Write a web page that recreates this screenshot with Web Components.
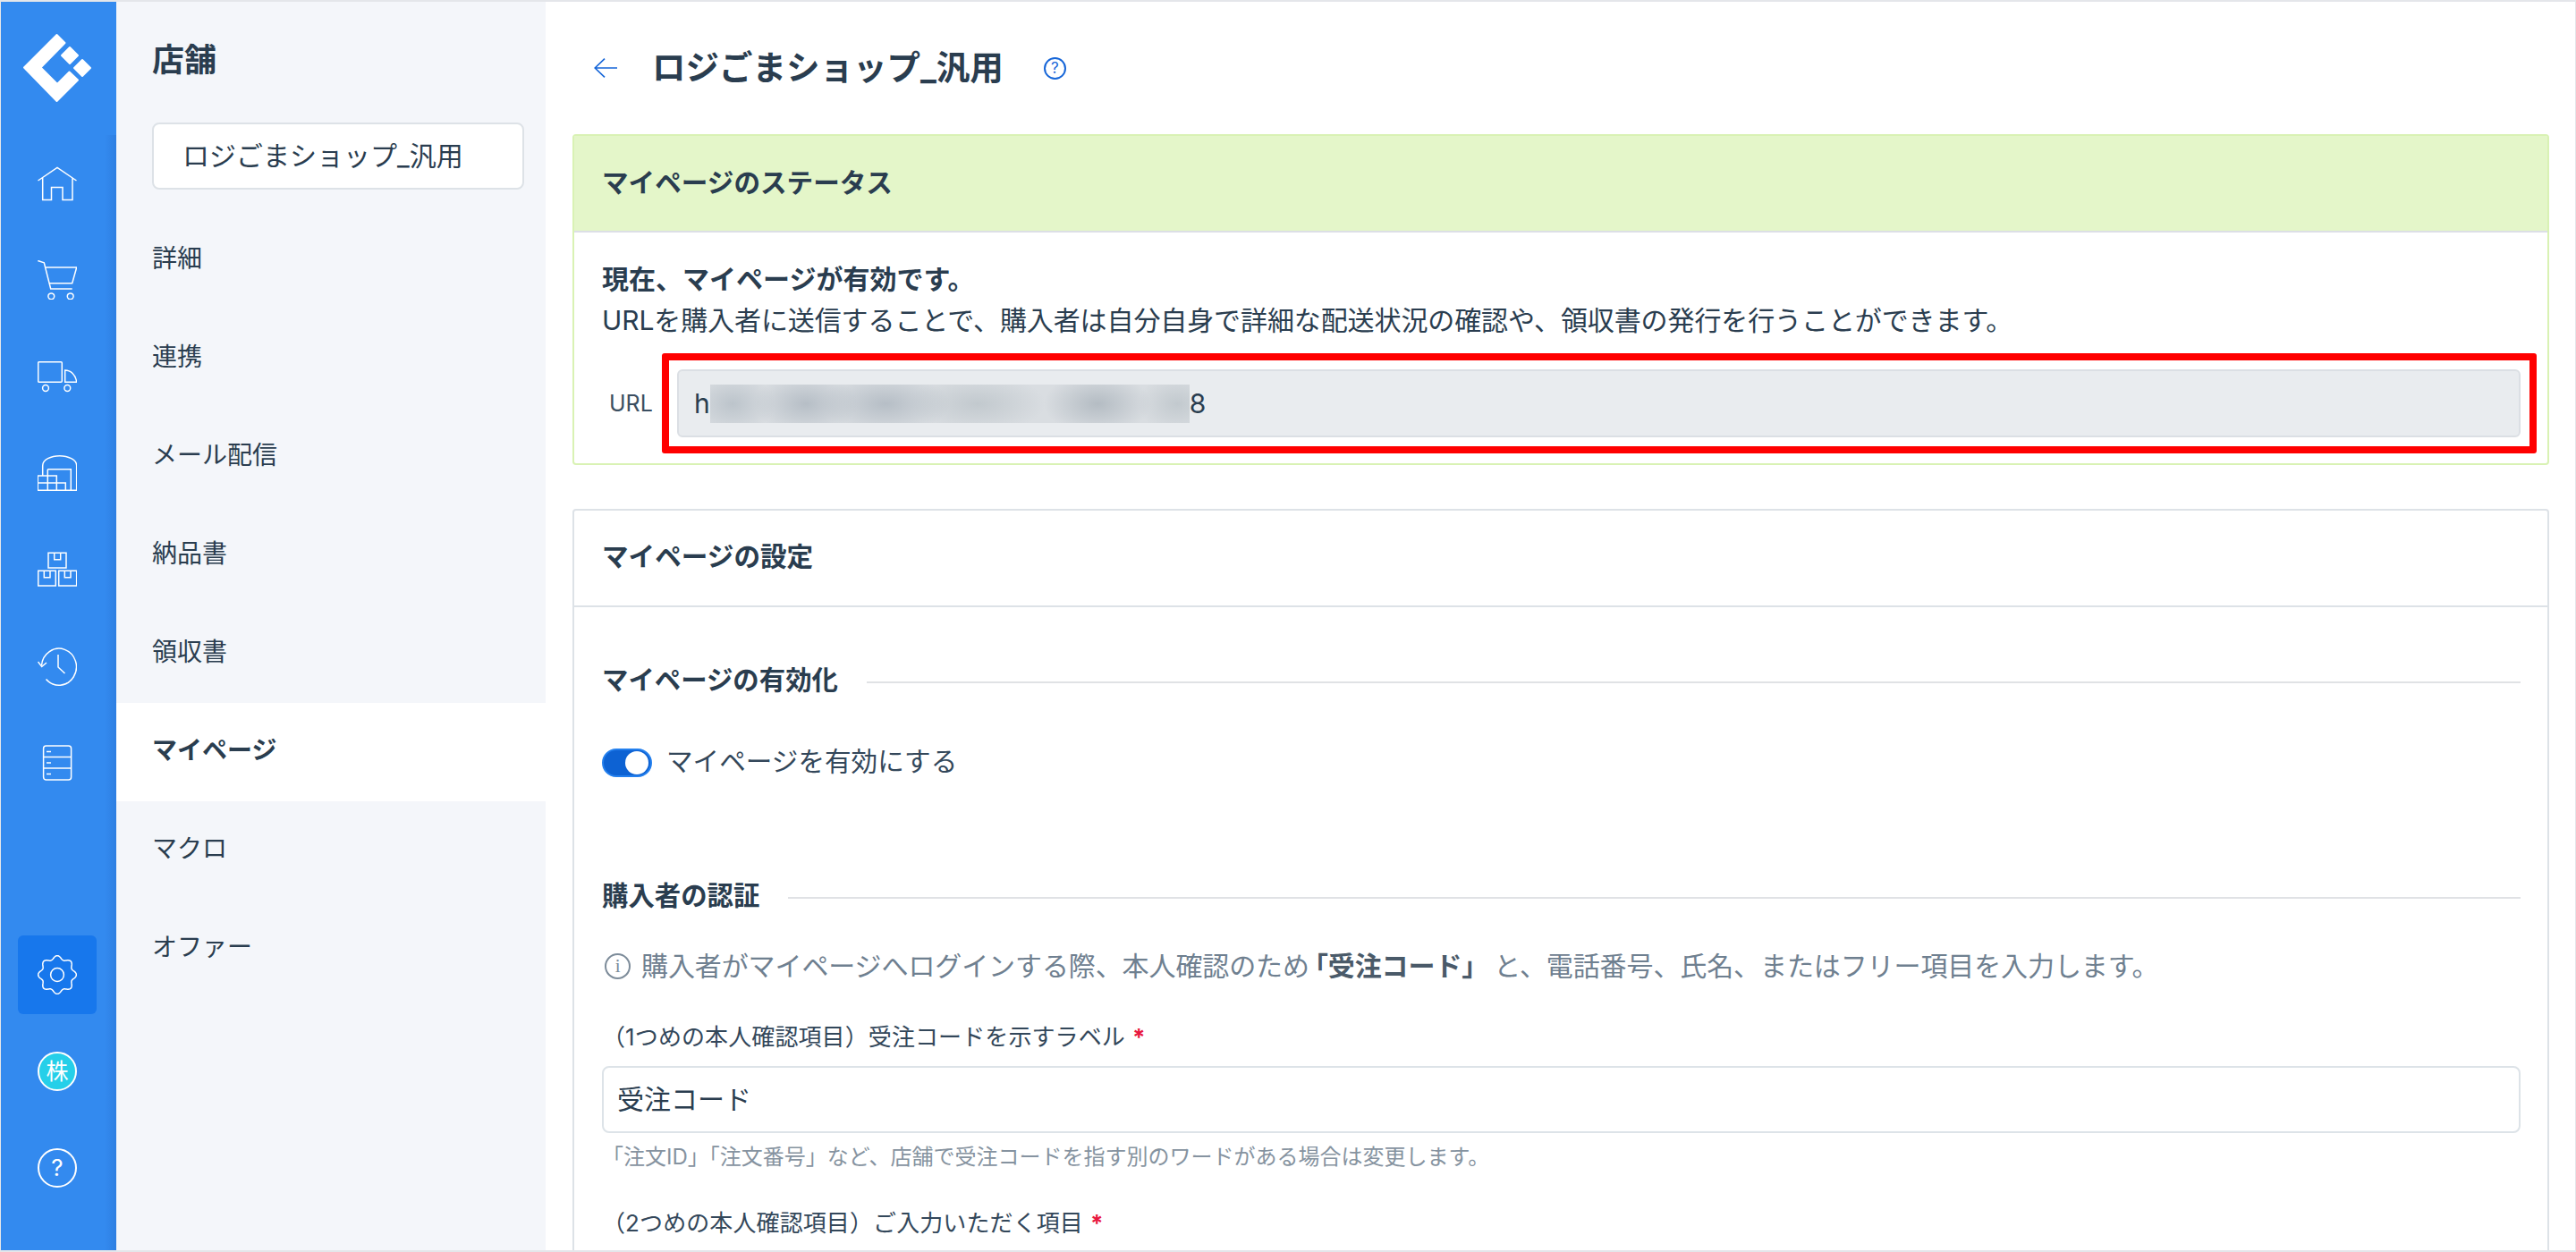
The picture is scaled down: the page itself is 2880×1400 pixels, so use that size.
<!DOCTYPE html>
<html lang="ja">
<head>
<meta charset="utf-8">
<title>マイページ</title>
<style>
    html, body { margin: 0; padding: 0; background: #fff; }
    body { font-family: Inter, "Noto Sans CJK JP", sans-serif; color: #2a3d4f; }
</style>
</head>
<body>
<app-shell>
    <rail-nav slot="rail"></rail-nav>
    <sub-nav slot="sub" heading="店舗" shop="ロジごまショップ_汎用">
        <sub-item>詳細</sub-item>
        <sub-item>連携</sub-item>
        <sub-item>メール配信</sub-item>
        <sub-item>納品書</sub-item>
        <sub-item>領収書</sub-item>
        <sub-item active>マイページ</sub-item>
        <sub-item>マクロ</sub-item>
        <sub-item>オファー</sub-item>
    </sub-nav>
    <page-head heading="ロジごまショップ_汎用"></page-head>

    <panel-card heading="マイページのステータス" tone="green">
        <status-body></status-body>
    </panel-card>

    <panel-card heading="マイページの設定" class="second">
        <section-head style="margin-top:59px">マイページの有効化</section-head>
        <toggle-row style="margin-top:53px">マイページを有効にする</toggle-row>
        <section-head style="margin-top:110px">購入者の認証</section-head>
        <info-note style="margin-top:32px">購入者がマイページへログインする際、本人確認のため<b>「受注コード」</b>と、電話番号、氏名、またはフリー項目を入力します。</info-note>
        <field-label style="margin-top:37px">（1つめの本人確認項目）受注コードを示すラベル</field-label>
        <text-box style="margin-top:12px">受注コード</text-box>
        <field-hint style="margin-top:9px">「注文ID」「注文番号」など、店舗で受注コードを指す別のワードがある場合は変更します。</field-hint>
        <field-label style="margin-top:36px;margin-bottom:80px">（2つめの本人確認項目）ご入力いただく項目</field-label>
    </panel-card>
</app-shell>

<script>
// small helper so each element only has to give its markup
function shadow(el, html) {
    el.attachShadow({ mode: 'open' }).innerHTML = html;
}

function gearPath() {
    let d = '';
    for (let i = 0; i <= 240; i++) {
        const a = i / 240 * Math.PI * 2;
        const r = 19.4 + 2 * Math.cos(8 * a);
        const x = 22 + r * Math.sin(a);
        const y = 22 - r * Math.cos(a);
        d += (i ? 'L' : 'M') + x.toFixed(2) + ' ' + y.toFixed(2);
    }
    return d + 'Z';
}

const RAIL_ICONS = {
    home: `<path d="M0.5 19 L22 4.5 L43.5 19 M5.7 15.5 V40.5 H15.5 V26.5 H28 V40.5 H39 V15.5"/>`,
    cart: `<path d="M0.3 0.5 L7.3 2.8 L14.7 32 H38.7 M9 8 H43.7 L38.7 25.7 H13"/><circle cx="15.3" cy="40.3" r="3.4"/><circle cx="36.7" cy="40.3" r="3.4"/>`,
    truck: `<rect x="0.7" y="5.7" width="26.6" height="22.6" rx="1"/><path d="M30.7 15 C37 15 42.5 20 43.7 28.3 H30.7 Z"/><circle cx="9" cy="35" r="3.4"/><circle cx="33.3" cy="35" r="3.4"/>`,
    warehouse: `<path d="M5.7 25 V13.7 C5.7 7 15 2.7 24.7 2.7 C34 2.7 43.7 7 43.7 13.7 V41.3 H0.3 V25 H21.3 V41.3 M0.3 33 H31.3 V41.3 M11.3 25 V41.3 M11.3 17.7 V25 M11.3 17.7 H37.3 V41.3"/>`,
    boxes: `<path d="M12 3.3 H32 V20 H12 Z M18.7 3.3 V10.7 H25.7 V3.3 M0.7 23.3 H20.3 V40 H0.7 Z M7.3 23.3 V30.7 H14 V23.3 M23.7 23.3 H43.7 V40 H23.7 Z M30.3 23.3 V30.7 H37 V23.3"/>`,
    history: `<path d="M4.5 21 A 19.5 20.5 0 1 1 9.5 36.5 M0.5 17 L4.7 22.5 L10 18 M23 9 V23 L30.5 30"/>`,
    server: `<rect x="6.6" y="3" width="31" height="38" rx="3"/><path d="M6.6 15.5 H37.6 M6.6 28 H37.6 M10 9.5 H15 M10 22 H15 M10 34.5 H15"/>`,
    gear: `<path d="${gearPath()}"/><circle cx="22" cy="22" r="7.4"/>`
};

class RailIcon extends HTMLElement {
    constructor() {
        super();
        const name = this.getAttribute('name');
        const body = RAIL_ICONS[name]
            ? `<svg width="44" height="44" viewBox="0 0 44 44" fill="none" stroke="#fff" stroke-width="1.5">${RAIL_ICONS[name]}</svg>`
            : `<span class="round ${name}"><slot></slot></span>`;
        shadow(this, `
            <style>
                :host { display: flex; height: 108px; align-items: center; justify-content: center; }
                .tile { width: 88px; height: 88px; display: flex; align-items: center; justify-content: center; border-radius: 6px; }
                :host([active]) .tile { background: #1777ec; }
                .round {
                    width: 44px; height: 44px; box-sizing: border-box; border: 2px solid #fff; border-radius: 50%;
                    display: flex; align-items: center; justify-content: center; color: #fff; line-height: 1;
                }
                .badge { background: #25cfe9; font-size: 25px; }
                .help { font-size: 26px; }
            </style>
            <div class="tile">${body}</div>`);
    }
}

class RailNav extends HTMLElement {
    constructor() {
        super();
        shadow(this, `
            <style>
                :host {
                    display: flex; flex-direction: column; width: 129px; height: 100%; box-sizing: border-box;
                    padding-right: 3px; padding-bottom: 38px;
                    background: linear-gradient(90deg, #338aef 0, #338aef 116px, #2e7fe2 129px);
                }
                .logo { height: 149px; margin-right: -3px; background: #338aef; }
                .logo svg { display: block; }
                .bottom { margin-top: auto; }
            </style>
            <div class="logo">
                <svg width="129" height="149" viewBox="1 2 129 149" fill="#fff" stroke="#fff" stroke-width="2" stroke-linejoin="round">
                    <path d="M27 75.5 L63.5 39 L72.5 48 L45.5 75.5 L64 94 L77.5 80.5 L87 89.5 L63.5 113 Z"/>
                    <path d="M69 62 L78 53 L87 62 L78 71 Z"/>
                    <path d="M83 76 L92 67 L101 76 L92 85 Z"/>
                </svg>
            </div>
            <rail-icon name="home"></rail-icon>
            <rail-icon name="cart"></rail-icon>
            <rail-icon name="truck"></rail-icon>
            <rail-icon name="warehouse"></rail-icon>
            <rail-icon name="boxes"></rail-icon>
            <rail-icon name="history"></rail-icon>
            <rail-icon name="server"></rail-icon>
            <div class="bottom">
                <rail-icon name="gear" active></rail-icon>
                <rail-icon name="badge">株</rail-icon>
                <rail-icon name="help">?</rail-icon>
            </div>`);
    }
}

class SubNav extends HTMLElement {
    constructor() {
        super();
        shadow(this, `
            <style>
                :host { display: block; width: 480px; height: 100%; background: #f4f6fa; box-sizing: border-box; padding-top: 40px; }
                h2 { margin: 0 0 0 40px; font-size: 36px; line-height: 50px; font-weight: 700; }
                .shop {
                    margin: 45px 24px 24px 40px; height: 75px; box-sizing: border-box; background: #fff;
                    border: 2px solid #dde2e7; border-radius: 8px; padding-left: 32px;
                    font-size: 30px; line-height: 71px;
                }
            </style>
            <h2>${this.getAttribute('heading')}</h2>
            <div class="shop">${this.getAttribute('shop')}</div>
            <slot></slot>`);
    }
}

class SubItem extends HTMLElement {
    constructor() {
        super();
        shadow(this, `
            <style>
                :host { display: block; height: 110px; line-height: 106px; padding-left: 40px; font-size: 28px; }
                :host([active]) { background: #fff; font-weight: 700; }
            </style>
            <slot></slot>`);
    }
}

class PageHead extends HTMLElement {
    constructor() {
        super();
        shadow(this, `
            <style>
                :host { display: flex; align-items: center; height: 148px; padding-left: 24px; }
                svg { display: block; flex: none; }
                h1 { margin: 0 0 0 39px; font-size: 37.5px; line-height: 50px; font-weight: 700; }
                .help {
                    margin-left: 45px; width: 25px; height: 25px; box-sizing: border-box; border: 2px solid #1565d8; border-radius: 50%;
                    color: #1565d8; font-size: 17px; line-height: 21px; text-align: center;
                }
            </style>
            <svg width="26" height="22" viewBox="0 0 26 22" fill="none" stroke="#1565d8" stroke-width="1.6"><path d="M12 0.6 L1.2 11 L12 21.4 M1.2 11 H26"/></svg>
            <h1>${this.getAttribute('heading')}</h1>
            <span class="help">?</span>`);
    }
}

class PanelCard extends HTMLElement {
    constructor() {
        super();
        shadow(this, `
            <style>
                :host { display: block; box-sizing: border-box; border: 2px solid #dde2e7; border-radius: 4px; background: #fff; }
                :host([tone="green"]) { border-color: #d9f2b4; }
                :host([tone="green"]) header { background: #e4f6c9; border-bottom-color: #dcdfe6; line-height: 104px; }
                header {
                    height: 106px; border-bottom: 2px solid #dde2e7; padding-left: 31px; box-sizing: content-box;
                    font-size: 29.6px; font-weight: 700; line-height: 102px;
                }
                .body { padding: 0 30px 0 31px; }
            </style>
            <header>${this.getAttribute('heading')}</header>
            <div class="body"><slot></slot></div>`);
    }
}

class StatusBody extends HTMLElement {
    constructor() {
        super();
        shadow(this, `
            <style>
                :host { display: block; padding: 29px 0; }
                p { margin: 0; font-size: 30px; line-height: 46px; letter-spacing: -0.1px; }
                p.lead { font-weight: 700; letter-spacing: 0; }
                .row { display: flex; align-items: center; margin-top: 32px; position: relative; }
                .label { width: 84px; flex: none; box-sizing: border-box; padding-left: 8px; font-size: 25px; color: #3b4f61; }
                .url {
                    flex: 1; height: 76px; box-sizing: border-box; display: flex; align-items: center; padding-left: 17px;
                    background: #e9ecef; border: 2px solid #dbdfe4; border-radius: 6px; font-size: 30px;
                }
                .mask {
                    width: 536px; height: 43px; flex: none;
                    background:
                        radial-gradient(ellipse 48px 34px at 25px 50%, #bcc4cb, transparent),
                        radial-gradient(ellipse 58px 34px at 107px 50%, #b6bec6, transparent),
                        radial-gradient(ellipse 72px 34px at 196px 50%, #b6bec6, transparent),
                        radial-gradient(ellipse 76px 32px at 299px 50%, #c2c9ce, transparent),
                        radial-gradient(ellipse 60px 34px at 433px 50%, #b4bcc3, transparent),
                        radial-gradient(ellipse 44px 32px at 522px 50%, #c2c9ce, transparent),
                        #d9dde1;
                }
                /* annotation frame drawn over the url row */
                .mark {
                    position: absolute; left: 67px; right: -18px; top: -18px; bottom: -18px;
                    border: 8px solid #f00; border-radius: 3px; pointer-events: none;
                }
            </style>
            <p class="lead">現在、マイページが有効です。</p>
            <p>URLを購入者に送信することで、購入者は自分自身で詳細な配送状況の確認や、領収書の発行を行うことができます。</p>
            <div class="row">
                <span class="label">URL</span>
                <div class="url"><span>h</span><span class="mask"></span><span>8</span></div>
                <div class="mark"></div>
            </div>`);
    }
}

class SectionHead extends HTMLElement {
    constructor() {
        super();
        shadow(this, `
            <style>
                :host { display: flex; align-items: center; font-size: 29.4px; font-weight: 700; line-height: 46px; }
                .rule { flex: 1; height: 2px; margin-left: 32px; margin-top: 4px; background: #e0e2e5; }
            </style>
            <slot></slot><span class="rule"></span>`);
    }
}

class ToggleRow extends HTMLElement {
    constructor() {
        super();
        shadow(this, `
            <style>
                :host { display: flex; align-items: center; height: 32px; font-size: 29.6px; line-height: 32px; color: #33475a; }
                .sw {
                    width: 56px; height: 32px; box-sizing: border-box; margin-right: 16px; position: relative;
                    background: #0d62d3; border: 2px solid #2480ee; border-radius: 16px;
                }
                .knob { position: absolute; right: 2px; top: 1px; width: 26px; height: 26px; border-radius: 50%; background: #fff; }
                span.text { position: relative; top: -2px; }
            </style>
            <span class="sw"><span class="knob"></span></span>
            <span class="text"><slot></slot></span>`);
    }
}

class InfoNote extends HTMLElement {
    constructor() {
        super();
        shadow(this, `
            <style>
                :host { display: flex; align-items: center; font-size: 30px; line-height: 46px; letter-spacing: -0.1px; color: #6f8090; }
                .i {
                    width: 29px; height: 29px; box-sizing: border-box; margin: 0 12px 0 3px; flex: none;
                    border: 2px solid #7d8c9a; border-radius: 50%;
                    font: 21px/24px "Liberation Serif", serif; text-align: center; color: #7d8c9a;
                }
                ::slotted(b) { color: #4a5a69; font-weight: 700; margin-left: -9px; margin-right: 6px; }
            </style>
            <span class="i">i</span>
            <span><slot></slot></span>`);
    }
}

class FieldLabel extends HTMLElement {
    constructor() {
        super();
        shadow(this, `
            <style>
                :host { display: block; font-size: 26px; line-height: 40px; letter-spacing: 0.1px; color: #33475a; }
                .req { color: #e8173f; margin-left: 8px; font-weight: 700; }
            </style>
            <slot></slot><span class="req">*</span>`);
    }
}

class TextBox extends HTMLElement {
    constructor() {
        super();
        shadow(this, `
            <style>
                :host {
                    display: block; height: 75px; box-sizing: border-box; border: 2px solid #dde3e8; border-radius: 8px;
                    padding-left: 15px; font-size: 30px; line-height: 71px; background: #fff;
                }
            </style>
            <slot></slot>`);
    }
}

class FieldHint extends HTMLElement {
    constructor() {
        super();
        shadow(this, `
            <style>
                :host { display: block; font-size: 24px; line-height: 36px; color: #8693a0; }
            </style>
            <slot></slot>`);
    }
}

class AppShell extends HTMLElement {
    constructor() {
        super();
        shadow(this, `
            <style>
                :host {
                    display: flex; width: 2880px; height: 1400px; box-sizing: border-box; overflow: hidden;
                    border: 1px solid #e4e6ea; border-width: 2px 1px; background: #fff;
                }
                main { flex: 1; min-width: 0; padding: 0 29px 0 30px; overflow: hidden; }
                ::slotted(panel-card.second) { margin-top: 49px; }
            </style>
            <slot name="rail"></slot>
            <slot name="sub"></slot>
            <main><slot></slot></main>`);
    }
}

customElements.define('rail-icon', RailIcon);
customElements.define('rail-nav', RailNav);
customElements.define('sub-item', SubItem);
customElements.define('sub-nav', SubNav);
customElements.define('page-head', PageHead);
customElements.define('panel-card', PanelCard);
customElements.define('status-body', StatusBody);
customElements.define('section-head', SectionHead);
customElements.define('toggle-row', ToggleRow);
customElements.define('info-note', InfoNote);
customElements.define('field-label', FieldLabel);
customElements.define('text-box', TextBox);
customElements.define('field-hint', FieldHint);
customElements.define('app-shell', AppShell);
</script>
</body>
</html>
